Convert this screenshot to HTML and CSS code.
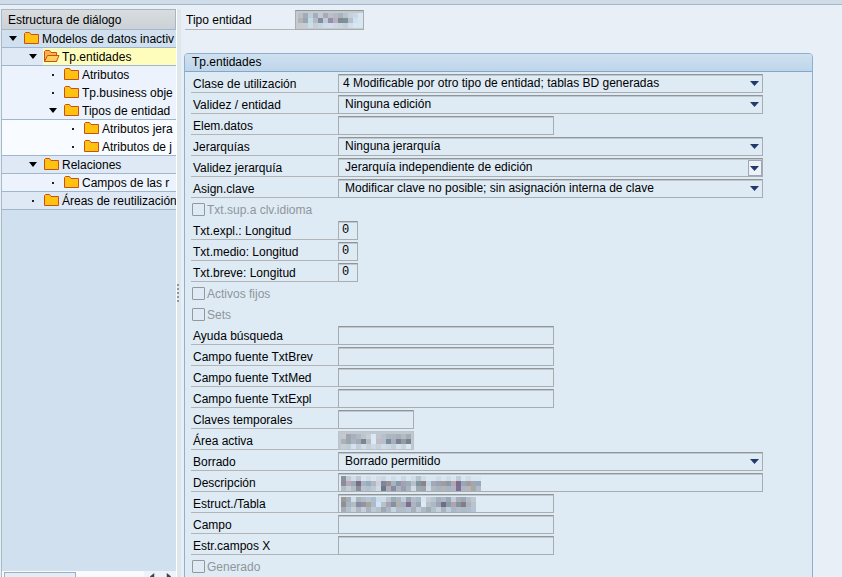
FILE: index.html
```html
<!DOCTYPE html>
<html lang="es">
<head>
<meta charset="utf-8">
<meta name="viewport" content="width=device-width, initial-scale=1">
<title>Tipo entidad</title>
<link rel="stylesheet" href="styles.css">
</head>
<body>
<svg class="defs" aria-hidden="true">
  <symbol id="folder" viewBox="0 0 17 14"><path d="M1.500 12.500V2.500L2.500 1.500H6.500L8 3.500H15.500V12.500Z" fill="#ffc20e" stroke="#c8501e"/></symbol>
  <symbol id="folder-open" viewBox="0 0 17 14"><path d="M1.500 12.500V2.500L2.500 1.500H6.500L8 3.500H13.500V12.500Z" fill="#ffb347" stroke="#c8501e"/><path d="M1.500 12.500L4.500 6.500H16L13.500 12.500Z" fill="#ffcf5a" stroke="#c8501e"/></symbol>
  <symbol id="down" viewBox="0 0 8 5"><path d="M0 0H8L4 5Z" fill="#000"/></symbol>
</svg>
<div class="toolbar"></div>
<div class="app">
  <nav class="side" aria-label="Estructura de diálogo">
    <h2 class="side-title">Estructura de diálogo</h2>
    <ul class="tree">
      <li class="node l0 line"><span class="mark"><svg><use href="#down"/></svg></span><a href="#"><svg><use href="#folder"/></svg>Modelos de datos inactiv</a></li>
      <li class="node l1 line"><span class="mark"><svg><use href="#down"/></svg></span><a href="#" class="current"><svg><use href="#folder-open"/></svg>Tp.entidades</a></li>
      <li class="node l2"><span class="mark dot"></span><a href="#"><svg><use href="#folder"/></svg>Atributos</a></li>
      <li class="node l2"><span class="mark dot"></span><a href="#"><svg><use href="#folder"/></svg>Tp.business obje</a></li>
      <li class="node l2 line"><span class="mark"><svg><use href="#down"/></svg></span><a href="#"><svg><use href="#folder"/></svg>Tipos de entidad</a></li>
      <li class="node l3"><span class="mark dot"></span><a href="#"><svg><use href="#folder"/></svg>Atributos jera</a></li>
      <li class="node l3 line"><span class="mark dot"></span><a href="#"><svg><use href="#folder"/></svg>Atributos de j</a></li>
      <li class="node l1 line"><span class="mark"><svg><use href="#down"/></svg></span><a href="#"><svg><use href="#folder"/></svg>Relaciones</a></li>
      <li class="node l2 line"><span class="mark dot"></span><a href="#"><svg><use href="#folder"/></svg>Campos de las r</a></li>
      <li class="node l1 line"><span class="mark dot"></span><a href="#"><svg><use href="#folder"/></svg>Áreas de reutilización</a></li>
    </ul>
    <div class="scroll"><span class="thumb"></span><span class="arrow"><svg viewBox="0 0 8 8"><path d="M6 0V8L1 4Z"/></svg></span><span class="arrow"><svg viewBox="0 0 8 8"><path d="M2 0V8L7 4Z"/></svg></span></div>
  </nav>
  <div class="splitter"><i></i><i></i><i></i><i></i><i></i></div>
  <main class="content">
    <div class="head row"><label for="f0">Tipo entidad</label><div class="masked"><input id="f0" class="key" readonly><svg class="mosaic" data-name="key"></svg></div></div>
    <section class="panel">
      <h1>Tp.entidades</h1>
      <form class="fields">
        <div class="row"><label for="f1">Clase de utilización</label><select id="f1" class="tight"><option>4 Modificable por otro tipo de entidad; tablas BD generadas</option></select></div>
        <div class="row"><label for="f2">Validez / entidad</label><select id="f2"><option>Ninguna edición</option></select></div>
        <div class="row"><label for="f3">Elem.datos</label><input id="f3" class="mid"></div>
        <div class="row"><label for="f4">Jerarquías</label><select id="f4"><option>Ninguna jerarquía</option></select></div>
        <div class="row"><label for="f5">Validez jerarquía</label><select id="f5" class="hot"><option>Jerarquía independiente de edición</option></select></div>
        <div class="row"><label for="f6">Asign.clave</label><select id="f6"><option>Modificar clave no posible; sin asignación interna de clave</option></select></div>
        <div class="check"><input type="checkbox" id="c1" disabled><label for="c1">Txt.sup.a clv.idioma</label></div>
        <div class="row"><label for="f7">Txt.expl.: Longitud</label><input id="f7" class="tiny" value="0"></div>
        <div class="row"><label for="f8">Txt.medio: Longitud</label><input id="f8" class="tiny" value="0"></div>
        <div class="row"><label for="f9">Txt.breve: Longitud</label><input id="f9" class="tiny" value="0"></div>
        <div class="check"><input type="checkbox" id="c2" disabled><label for="c2">Activos fijos</label></div>
        <div class="check"><input type="checkbox" id="c3" disabled><label for="c3">Sets</label></div>
        <div class="row"><label for="f10">Ayuda búsqueda</label><input id="f10" class="mid"></div>
        <div class="row"><label for="f11">Campo fuente TxtBrev</label><input id="f11" class="mid"></div>
        <div class="row"><label for="f12">Campo fuente TxtMed</label><input id="f12" class="mid"></div>
        <div class="row"><label for="f13">Campo fuente TxtExpl</label><input id="f13" class="mid"></div>
        <div class="row"><label for="f14">Claves temporales</label><input id="f14" class="short"></div>
        <div class="row"><label for="f15">Área activa</label><div class="masked"><input id="f15" class="short covered" readonly><svg class="mosaic" data-name="area"></svg></div></div>
        <div class="row"><label for="f16">Borrado</label><select id="f16"><option>Borrado permitido</option></select></div>
        <div class="row"><label for="f17">Descripción</label><div class="masked grow"><input id="f17" class="long"><svg class="mosaic" data-name="text"></svg></div></div>
        <div class="row"><label for="f18">Estruct./Tabla</label><div class="masked"><input id="f18" class="mid"><svg class="mosaic" data-name="table"></svg></div></div>
        <div class="row"><label for="f19">Campo</label><input id="f19" class="mid"></div>
        <div class="row"><label for="f20">Estr.campos X</label><input id="f20" class="mid"></div>
        <div class="check"><input type="checkbox" id="c4" disabled><label for="c4">Generado</label></div>
      </form>
    </section>
  </main>
</div>
<script src="mosaic.js"></script>
</body>
</html>
```
FILE: styles.css
```css
* { box-sizing: border-box; }
body { margin: 0; height: 100vh; overflow: hidden; display: flex; flex-direction: column; background: #e8eff6; color: #000; font: 12px/18px "Liberation Sans", Arial, sans-serif; }
.defs { display: none; }
.toolbar { flex: none; height: 5px; background: #d0dde8; border-bottom: 1px solid #a3b8cc; }
.app { flex: 1; min-height: 0; display: flex; }
.side { flex: none; width: 176px; margin: 4px 0 0 1px; border-left: 1px solid #a9b9c8; border-right: 1px solid #fff; background: #d1e0ee; display: flex; flex-direction: column; overflow: hidden; }
.side-title { flex: none; margin: 0; height: 21px; padding-left: 6px; font-size: 12px; line-height: 20px; font-weight: normal; background: linear-gradient(#d9dddf, #cbd1d6); border: 1px solid #a9b5c0; border-left: 0; }
.tree { flex: 1; margin: 0; padding: 0; list-style: none; }
.node { display: flex; height: 18px; border-bottom: 1px solid transparent; white-space: nowrap; }
.line { border-bottom-color: #9fb6cf; }
.node a { flex: 1; display: flex; gap: 2px; color: #000; text-decoration: none; line-height: 18px; }
.node a svg { flex: none; width: 17px; height: 14px; margin-top: 1px; }
.node .current { background: #fffdbb; }
.mark { flex: none; width: 21px; padding-left: 1px; display: flex; align-items: center; justify-content: center; }
.mark svg { width: 8px; height: 5px; }
.dot::before { content: ""; width: 2px; height: 2px; background: #222; }
.l0 { background-color: #d1e0ee; }
.l1 { padding-left: 20px; background-color: #dfe9f5; }
.l2 { padding-left: 40px; background-color: #ecf3fc; }
.l3 { padding-left: 60px; background-color: #f8fbff; }
.scroll { flex: none; height: 6px; display: flex; background: #f8fafc; overflow: hidden; padding-left: 2px; }
.thumb { width: 72px; height: 14px; border: 1px solid #9caec2; background: #e4edf6; margin: 1px auto 0 0; }
.arrow { width: 16px; padding: 2px 5px; background: #eef3f8; }
.arrow svg { display: block; width: 7px; height: 7px; fill: #34465c; }
.splitter { flex: none; width: 4px; margin-top: 4px; background: #dde7ec; display: flex; flex-direction: column; justify-content: center; gap: 2px; }
.splitter i { width: 2px; height: 2px; background: #8d99a5; }
.content { flex: 1; min-width: 0; padding: 5px 29px 0 3px; }
.row, .check { display: flex; height: 19px; margin-bottom: 2px; }
.row label { flex: none; width: 147px; padding-left: 2px; line-height: 20px; border-bottom: 1px solid #b4b4b4; }
.head { height: 20px; margin-bottom: 23px; padding-left: 1px; }
.head label { width: 110px; padding-left: 1px; }
.panel { border: 1px solid #8fafd0; border-radius: 4px 4px 0 0; background: #deebf5; }
.panel h1 { margin: 0; height: 18px; padding-left: 7px; font-size: 12px; line-height: 17px; font-weight: normal; border-radius: 3px 3px 0 0; background: linear-gradient(#cfe1f0, #bed5ea); border-bottom: 1px solid #85a5c9; }
.fields { padding: 2px 49px 0 6px; }
.row input, .row select { appearance: none; height: 19px; margin: 0; padding: 0 6px 2px; border: 1px solid #a8adb0; border-top-color: #8f9599; border-radius: 0; outline: 0; background: #deebf5; box-shadow: inset 0 1px #c0c8ce; color: #000; font: 12px/16px "Liberation Sans", Arial, sans-serif; }
.row select { flex: 1; min-width: 0; background: #deebf5 url("data:image/svg+xml,%3Csvg xmlns='http://www.w3.org/2000/svg' width='9' height='5'%3E%3Cpath d='M0 0H9L4.500 5Z' fill='%23223a6b'/%3E%3C/svg%3E") no-repeat right 3px center; }
.row .hot { background-image: url("data:image/svg+xml,%3Csvg xmlns='http://www.w3.org/2000/svg' width='14' height='16'%3E%3Crect x='.5' y='.5' width='13' height='15' fill='%23eef2f7' stroke='%239aa9be'/%3E%3Cpath d='M2 6H11L6.500 11Z' fill='%23223a6b'/%3E%3C/svg%3E"); background-position: right 0 center; }
.row .tight { padding-left: 4px; }
.row .long { width: 100%; }
.row .mid { width: 216px; }
.row .short { width: 76px; }
.row .tiny { width: 20px; padding: 0 3px 2px; font-family: "Liberation Mono", monospace; }
.row .key { width: 69px; height: 20px; background: #c4cbcf; }
.row .covered { background: #c0c8cf; border-color: #bcc4cb; }
.masked { position: relative; display: flex; }
.grow { flex: 1; min-width: 0; }
.mosaic { position: absolute; left: 3px; top: 3px; pointer-events: none; shape-rendering: crispEdges; }
.check { align-items: center; color: #8e959b; }
.check input { appearance: none; width: 13px; height: 13px; margin: 0 2px 0 1px; border: 1px solid #92989c; border-radius: 1px; background: #deebf5; }
```
FILE: mosaic.js
```js
// Pixelated values of the hidden fields: one string per row, one hex colour per cell.
const CELL = 5;
const mosaics = {
  key: [
    "b9c0c8 a3abb9 c0cbd4 a3adbb c3cad4 a9a9b8 b9c0c6 b0bcc8 a9b3bd b9c3ce c8d0d8 c8d8e8 d8e6f2",
    "b4b4b8 9aa4b4 bfdce8 b4b9c2 848ca4 c0cbd8 9590a8 b6b0c0 848a90 7f90a0 b4c0cc d0e0f0 d8e6f2",
    "c8ccce c4ced4 d0dce4 c6cfd8 c8d6e4 d0dce8 d4dcec ccd8e6 ccd4dc c4d0dc d2deea d8e6f2 d8e6f2"
  ],
  area: [
    "c2c9cf a0a4ac a4b2c0 b0b8c4 bcc4cc c6d0d8 d8e8f4 c0c6d0 b8c0cc a6b8c4 b0b4be a8b0ba b4bac2 a4acb4",
    "aab2ba 9ca6b0 b0b2bc a0acb8 7a8690 b4bcc6 dceaf6 c4bac8 b4c0cc 7c8c98 a4b0bc 7c8090 909ca8 7a828c",
    "c8d0d6 c0ccd6 d4e2ee c4ced8 d0deea c8d0d8 ccdae6 c8d0d8 d0dce8 ccd8e2 c4ced8 d4e0ec c8d4de dce8f0"
  ],
  text: [
    "8c929c c0cad4 d2deea c2c8d4 d8e6f2 d2dce6 d8e6f2 d2dce6 ccd8e4 d8e6f2 d2dce6 d8e6f2 ccd8e4 d8e6f2 d2dce6 b8c4cc d0dce6 d8e6f2 d8e6f2 d2dce6 d8e6f2 d2dce6 d8e6f2 c4ccd8 d8e6f2 d2dce6 d8e6f2 d8e6f2",
    "8c8c98 b8a8b8 9ca8b4 7a6c84 a8b4c4 98acc0 b4b8c4 ccd2d8 80849c 9a9094 a4b4c0 8898a8 a8a0b0 9cacb8 b8c0cc 8094a0 8c8488 c0d4e4 a4a8b4 98a4b4 a49c9c 8c98ac b4a8ac 7c6c90 98a8b8 a49c98 a0a8b4 98a8bc",
    "b4bcc4 c0ccd8 b4bcc4 8890a0 b8c4d0 b4c0cc bccad4 d0dae2 6c7890 b0acb4 8c88a8 a8b4c0 98a0b0 a8b4c0 d0dce4 9ca8b4 a0a4a8 ccdce8 b0b8c4 a8b4c0 b4b4b8 a4b4c4 b0b4bc 806c94 a8b8c4 b8b4b8 a8a8a8 acbccc"
  ],
  table: [
    "9c9c94 a4acbc d2deea aab4c0 b4bcc8 b4c4d4 b0bcc8 c8dcf0 d0dce4 b8c4d0 a0acb4 a8b4c0 c0ccdc 98a4b0 b4bcc8 a8b8c4 d8e6f2 c4ccd4 b8c4d0 a4b0bc b0b8c8 98a8b4 c4ccd4 a8acb8 9ca8b4 b4bcc8 c0c8d0",
    "8c9098 a4b4c0 b4bcc4 8490a0 9890a4 a4a898 acb8cc d0e4f8 b8c0cc a4a4b4 8490a4 b4b0a8 a0b0c0 806c8c acb4c0 98a8b4 dceaf6 b8c0c8 acb8c4 9ca4b4 706c84 8c9cac b0a4b0 8494a4 887c80 a8b4c0 b8c4cc",
    "a8acb4 b4c0cc c8d0d8 b0b8c4 c4cedc a8b4c0 bccad8 b8c0c8 9ca8b4 acb8c4 c4d4e0 b0bcc8 b4bcc8 b4c4d4 a8b0bc c0ccd8 b0b8c0 a0acb8 b4c0cc c4d0dc a8b4c4 c0ccd8 a8b8c8 b4bcc8 a8bccc b0bcc8 b4c4d4"
  ]
};
document.querySelectorAll(".mosaic").forEach(svg => {
  const rows = mosaics[svg.dataset.name].map(r => r.split(" "));
  svg.setAttribute("width", rows[0].length * CELL);
  svg.setAttribute("height", rows.length * CELL);
  svg.innerHTML = rows.map((row, y) => row.map((c, x) =>
    `<rect x="${x * CELL}" y="${y * CELL}" width="${CELL}" height="${CELL}" fill="#${c}"/>`).join("")).join("");
});
```
